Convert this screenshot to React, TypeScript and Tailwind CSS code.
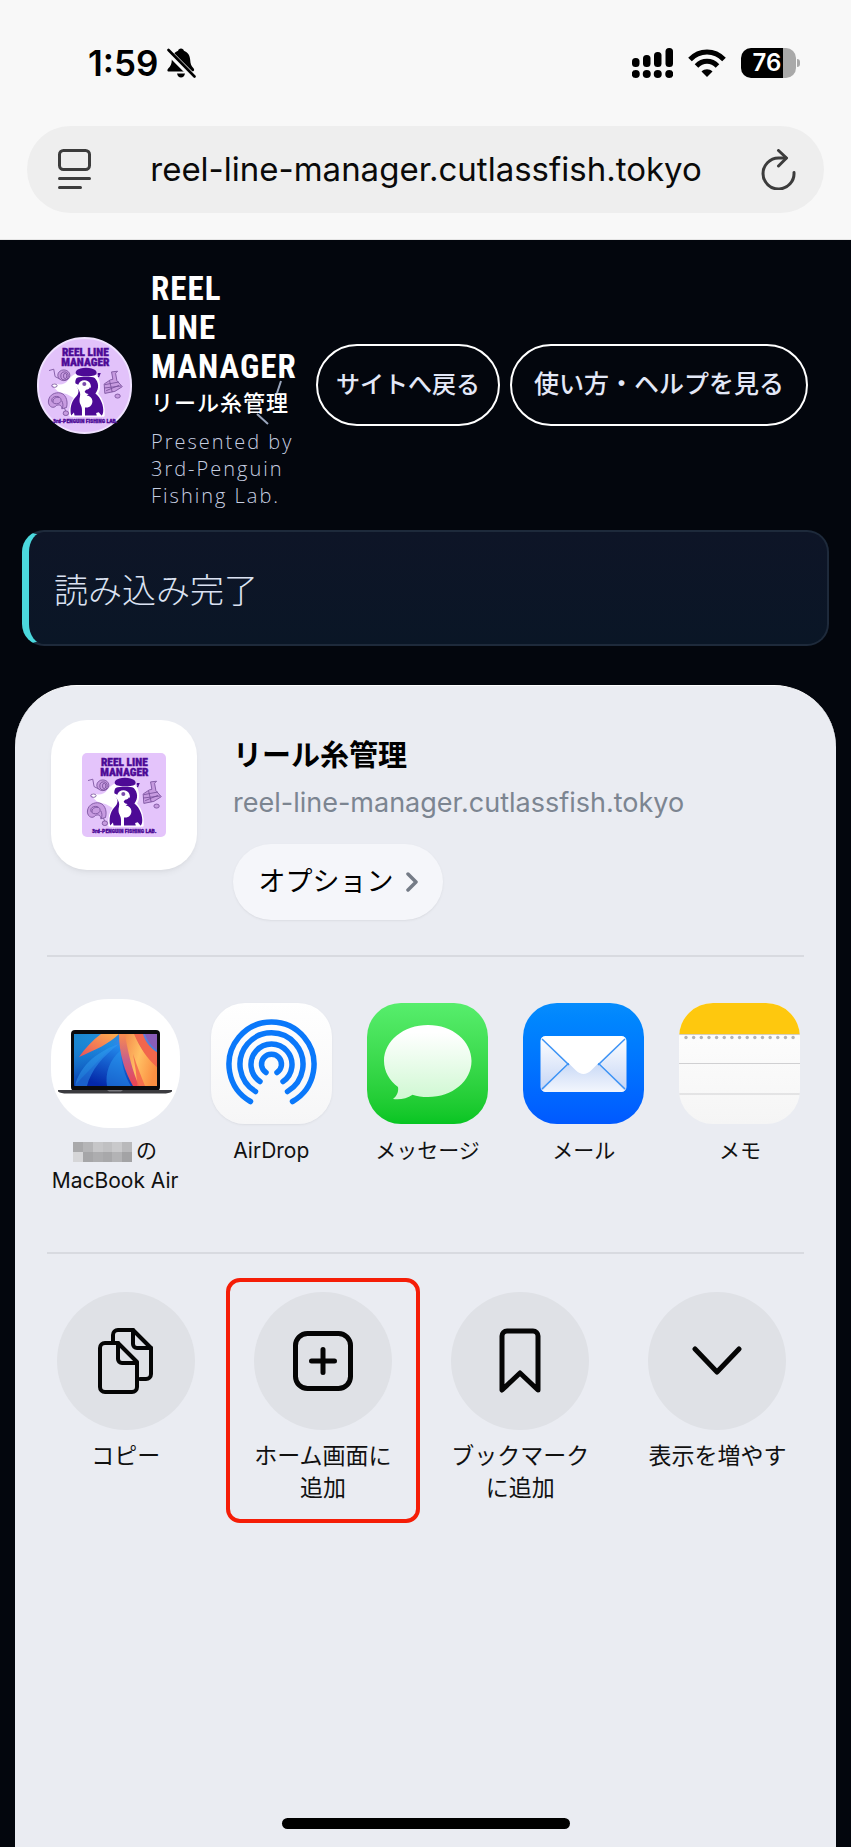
import type { ReactNode } from "react";

const sans = "font-['Inter','Noto_Sans_CJK_JP',sans-serif]";

function BellOff() {
    return (
        <svg viewBox="0 0 30 31" className="h-[31px] w-[30px]" aria-hidden="true">
            <path d="M15 0.5c-1.600 0-2.600 1-2.900 2.200C8 4.200 6 7.500 5.800 12c-.2 4-1 6-3.600 8.400C1.200 21.500.9 23.500 3 23.500h23.500c2 0 2-2 1-3.200-2.300-2.500-3.100-4.500-3.300-8.300-.2-4.500-2.200-7.800-6.300-9.300C17.600 1.500 16.600.5 15 .5z" />
            <path d="M11 25.500h8c-.5 2.800-2 4-4 4s-3.500-1.200-4-4z" />
            <path d="M1 2.500L28 29.500" stroke="#f8f8f8" strokeWidth="6.500" />
            <path d="M2.500 2L28.500 28.500" stroke="#000" strokeWidth="2.600" strokeLinecap="round" />
        </svg>
    );
}

function Signal() {
    const bars = [
        { x: 0, y: 10, h: 9 },
        { x: 11, y: 7, h: 12 },
        { x: 22, y: 4, h: 15 },
        { x: 33.500, y: 0, h: 19 },
    ];
    return (
        <svg viewBox="0 0 41 31" className="h-[31px] w-[41px]" aria-hidden="true">
            {bars.map((bar) => (
                <g key={bar.x}>
                    <rect x={bar.x} y={bar.y} width="7.500" height={bar.h} rx="3.500" />
                    <circle cx={bar.x + 3.750} cy="26" r="4" />
                </g>
            ))}
        </svg>
    );
}

function Wifi() {
    return (
        <svg viewBox="0 0 38 28" className="h-[28px] w-[38px]" aria-hidden="true" fill="none" stroke="#000" strokeWidth="5">
            <path d="M2 10.500C11.500.5 26.500.5 36 10.500" />
            <path d="M8.500 17C14.500 10.800 23.500 10.800 29.500 17" />
            <path d="M19 28l-5.500-5.600c3-3 8-3 11 0z" fill="#000" stroke="none" />
        </svg>
    );
}

function Battery() {
    return (
        <div className="flex items-center gap-px">
            <div className="flex h-[30px] w-[55px] items-center justify-center rounded-[10px] bg-[linear-gradient(to_right,#000_76%,#a9a9a9_76%)] pr-[3px] text-[24px] leading-none font-semibold text-white">
                76
            </div>
            <div className="h-[8px] w-[3px] rounded-r-full bg-[#a9a9a9]" />
        </div>
    );
}

function PenguinLogo({ className }: { className: string }) {
    return (
        <svg viewBox="0 0 250 250" className={className} role="img" aria-label="Reel Line Manager">
            <g
                fill="#4d0a96"
                fontFamily="'Roboto Condensed','Roboto',sans-serif"
                fontWeight="900"
                textAnchor="middle"
            >
                <text x="126" y="38" fontSize="34" stroke="#4d0a96">REEL LINE</text>
                <text x="126" y="69" fontSize="34" stroke="#4d0a96">MANAGER</text>
                <text x="126" y="237" fontSize="17" stroke="#4d0a96" strokeWidth="1">3rd-PENGUIN FISHING LAB.</text>
            </g>
            {/* white halo and beak */}
            <path
                d="M32 124c22 8 38 0 48-14 6-8 12-14 20-16l56 4c12 12 14 38 4 52 14 16 22 40 20 66H82c-2-22 4-42 14-54-12-6-20-14-34-16-14-2-24-10-30-22z"
                fill="#fff"
                stroke="#fff"
                strokeWidth="7"
                strokeLinejoin="round"
            />
            {/* hat */}
            <path d="M100 94c-8-8 2-20 28-20s36 12 30 19c-3 4-8 5-14 5h-30c-6 0-11-1-14-4z" fill="#4d0a96" />
            <path d="M163 89h9l-5 13-4-1 2-5h-2z" fill="#4d0a96" />
            {/* head and body */}
            <path d="M100 104c14-6 44-6 54 0 12 12 14 32 2 46 16 12 26 38 23 56-1 6-3 9-5 10l-8-10-8 2 2 8H94l-2-9-8 9c-5-20 0-40 12-54 8-8 12-16 8-26-6-10-12-20-4-32z" fill="#4d0a96" />
            <path d="M78 118c10 2 18 6 26 18 6 8 8 14 6 24-2 8-2 18 2 24 3 6 4 10 4 16v17h9v-25c14 2 23-8 22-20-1-9-7-15-17-16 8-4 12-10 12-16 4-18-6-29-18-29-10 0-17 6-19 13-8-4-16-8-27-6z" fill="#fff" />
            <path d="M128 139c6 0 10-3 12-8l6 8-4 14-10-2c-4-1-6-3-8-6z" fill="#4d0a96" />
            <circle cx="123" cy="122" r="6" fill="#7a4bab" />
            {/* reels */}
            <g fill="#c79be0" stroke="#77509b" strokeWidth="2.500">
                <path d="M18 82l14-4 4 22 16 8" fill="none" />
                <ellipse cx="62" cy="96" rx="18" ry="16" />
                <ellipse cx="64" cy="98" rx="11" ry="12" fill="none" />
                <ellipse cx="66" cy="98" rx="5" ry="8" fill="none" />
                <ellipse cx="34" cy="127" rx="8" ry="5" fill="none" />
                <path d="M204 86l18-2-6 6 4 22 16 18-22 14-30 6-2-28 18-12 8-2z" />
                <path d="M184 124l42-8M182 134l50-6M188 142l38-16M198 112l8 34" fill="none" />
                <ellipse cx="222" cy="158" rx="8" ry="6" />
                <path d="M16 176c0-18 14-28 30-28 20 0 30 22 24 44l-14 4c0-10-6-14-16-10-8 10-22 6-24-10z" />
                <ellipse cx="40" cy="170" rx="14" ry="11" fill="none" />
                <path d="M30 176c-2-10 8-16 18-14M56 172c4 8 4 14 2 22M64 194l4 10" fill="none" />
                <ellipse cx="68" cy="209" rx="8" ry="7" />
            </g>
        </svg>
    );
}

function MacBook() {
    return (
        <div className="h-[129px] w-[129px] rounded-[58px] bg-white">
            <svg viewBox="0 0 129 129" className="size-full" aria-hidden="true">
                <defs>
                    <linearGradient id="mbBlue" x1="0.900" y1="0" x2="0.350" y2="1">
                        <stop offset="0" stopColor="#6d7bd6" />
                        <stop offset="0.350" stopColor="#2288ea" />
                        <stop offset="1" stopColor="#0428a8" />
                    </linearGradient>
                    <linearGradient id="mbCyan" x1="0" y1="0" x2="0.700" y2="0.800">
                        <stop offset="0" stopColor="#1a86cc" />
                        <stop offset="1" stopColor="#1b9be0" stopOpacity="0" />
                    </linearGradient>
                    <linearGradient id="mbFlame" x1="0" y1="0" x2="1" y2="0.400">
                        <stop offset="0" stopColor="#f58a4c" />
                        <stop offset="0.500" stopColor="#ffc063" />
                        <stop offset="1" stopColor="#fb8f42" />
                    </linearGradient>
                    <linearGradient id="mbRed" x1="0" y1="0" x2="0" y2="1">
                        <stop offset="0" stopColor="#fb8a4c" />
                        <stop offset="0.500" stopColor="#c8608a" />
                        <stop offset="1" stopColor="#ee4450" />
                    </linearGradient>
                    <linearGradient id="mbStreak" x1="1" y1="0" x2="0" y2="1">
                        <stop offset="0" stopColor="#ffb04c" />
                        <stop offset="1" stopColor="#e8505c" />
                    </linearGradient>
                    <clipPath id="mbScreen">
                        <rect x="23" y="35" width="83" height="52" />
                    </clipPath>
                </defs>
                <rect x="20" y="31" width="89" height="61" rx="4" fill="#0b0b0d" />
                <g clipPath="url(#mbScreen)">
                    <rect x="23" y="35" width="83" height="52" fill="url(#mbBlue)" />
                    <path d="M23 35h50L23 87z" fill="url(#mbCyan)" />
                    <path d="M24 87c4-18 20-34 44-42-16 12-28 26-32 42z" fill="#35a4f5" opacity="0.450" />
                    <path d="M56 87c-2-12 2-26 14-36 0 14 4 26 10 36z" fill="#2a9af0" opacity="0.500" />
                    <path d="M50 35c-8 6-16 14-22 23 16-7 30-13 40-23z" fill="url(#mbStreak)" />
                    <path d="M68 35c0 20 6 38 14 52h10C86 66 82 50 80 35z" fill="url(#mbRed)" />
                    <path d="M74 35c3 20 8 38 14 52h20V68C98 60 88 48 84 35z" fill="url(#mbFlame)" />
                    <path d="M82 55c2 12 4 22 4 32h8c-4-10-8-20-12-32z" fill="#f2604c" opacity="0.800" />
                    <path d="M83 35c6 14 14 26 24 34V54C98 48 94 42 92 35z" fill="#f2664c" />
                    <path d="M94 35c3 8 7 13 13 17V35z" fill="#8a5cb8" />
                </g>
                <path d="M7 91h114v1.500c-2 1.500-5 2-9 2H16c-4 0-7-.5-9-2z" fill="#3b3b3f" />
                <path d="M56 91h16l-2 1.500H58z" fill="#77777c" />
            </svg>
        </div>
    );
}

function AirDrop() {
    return (
        <div className="size-[121px] rounded-[34px] bg-linear-to-b from-white to-[#f6f6f7] shadow-sm shadow-black/5">
            <svg viewBox="0 0 121 121" className="size-full" aria-hidden="true" fill="none" stroke="#0a78fa" strokeWidth="5.500" strokeLinecap="round">
                <path d="M39.500 98.500A42.500 42.500 0 1 1 81.500 98.500" />
                <path d="M44.500 88.500A31.500 31.500 0 1 1 76.500 88.500" />
                <path d="M49 78.500A20.500 20.500 0 1 1 72 78.500" />
                <path d="M55 69.500A10 10 0 1 1 66 69.500" />
            </svg>
        </div>
    );
}

function Messages() {
    return (
        <div className="size-[121px] rounded-[34px] bg-linear-to-b from-[#57ee6c] to-[#06c522]">
            <svg viewBox="0 0 121 121" className="size-full" aria-hidden="true">
                <defs>
                    <linearGradient id="bubble" x1="0" y1="0" x2="0" y2="1">
                        <stop offset="0.100" stopColor="#fff" />
                        <stop offset="1" stopColor="#cff8d2" />
                    </linearGradient>
                </defs>
                <path d="M61 22c24.500 0 43.500 16 43.500 36S85.500 94 61 94c-6 0-11-.8-15.500-2.300C40 95.500 33 97 26 96c4-3 5.800-7.500 5-12C22.500 77.500 17 68.500 17 58c0-20 19.500-36 44-36z" fill="url(#bubble)" />
            </svg>
        </div>
    );
}

function Mail() {
    return (
        <div className="size-[121px] rounded-[34px] bg-linear-to-b from-[#068cfd] to-[#0159ff]">
            <svg viewBox="0 0 121 121" className="size-full" aria-hidden="true">
                <defs>
                    <linearGradient id="side" x1="0" y1="0" x2="0" y2="1">
                        <stop offset="0" stopColor="#fff" />
                        <stop offset="1" stopColor="#c3d4f5" />
                    </linearGradient>
                    <linearGradient id="pocket" x1="0" y1="0" x2="0" y2="1">
                        <stop offset="0" stopColor="#c9d9f6" />
                        <stop offset="1" stopColor="#f4f7fd" />
                    </linearGradient>
                    <clipPath id="envelope">
                        <rect x="17.500" y="33" width="86" height="56" rx="5" />
                    </clipPath>
                </defs>
                <g clipPath="url(#envelope)">
                    <rect x="17" y="33" width="87" height="56" fill="url(#side)" />
                    <path d="M17 90l30-30h27l30 30z" fill="url(#pocket)" />
                    <path d="M19 86l28-27M102 86L74 59" stroke="#3c93f5" strokeWidth="1.500" />
                    <path d="M19 34l34 33.500c4.500 4.500 10.500 4.500 15 0L102 34z" fill="#fff" />
                    <path d="M19 36l27 26M102 36L75 62" stroke="#3c93f5" strokeWidth="1.500" />
                </g>
            </svg>
        </div>
    );
}

function Notes() {
    return (
        <div className="size-[121px] overflow-hidden rounded-[34px] bg-linear-to-b from-white to-[#f5f5f5]">
            <svg viewBox="0 0 121 121" className="size-full" aria-hidden="true">
                <rect width="121" height="31" fill="#fec80e" />
                <path d="M0 31.500h121" stroke="#d5cfc0" />
                {Array.from({ length: 15 }).map((_, i) => (
                    <circle key={i} cx={7 + i * 7.650} cy="34.500" r="1.700" fill="#b4b4b6" />
                ))}
                <path d="M0 60.500h121M0 91h121" stroke="#d0d0d2" strokeWidth="1.200" />
            </svg>
        </div>
    );
}

const mosaic = [
    "bg-[#a9a9ab]", "bg-[#b5b5b7]", "bg-[#c6c6c8]", "bg-[#c0c0c2]", "bg-[#c9c9cb]", "bg-[#b9b9bb]",
    "bg-[#d6d6d8]", "bg-[#a6a6a8]", "bg-[#adadaf]", "bg-[#a8a8aa]", "bg-[#b3b3b5]", "bg-[#a3a3a5]",
];

const targets: { icon: ReactNode; label: ReactNode }[] = [
    {
        icon: <MacBook />,
        label: (
            <>
                <span className="mr-1 inline-grid h-5 w-[59px] grid-cols-6 align-middle">
                    {mosaic.map((tone, i) => (
                        <span key={i} className={tone} />
                    ))}
                </span>
                の<br />
                MacBook Air
            </>
        ),
    },
    { icon: <AirDrop />, label: "AirDrop" },
    { icon: <Messages />, label: "メッセージ" },
    { icon: <Mail />, label: "メール" },
    { icon: <Notes />, label: "メモ" },
];

const line = { fill: "none", stroke: "#050505", strokeLinecap: "round", strokeLinejoin: "round" } as const;

const actions = [
    {
        label: ["コピー"],
        highlighted: false,
        icon: (
            <svg viewBox="0 0 56 66" className="h-[66px] w-[56px]" strokeWidth="4" {...line}>
                <path d="M15 13V7a5 5 0 0 1 5-5h15l18 18v26a5 5 0 0 1-5 5h-6" />
                <path d="M35 2v14a4 4 0 0 0 4 4h14" />
                <path d="M7 15h13l19 19v25a5 5 0 0 1-5 5H7a5 5 0 0 1-5-5V20a5 5 0 0 1 5-5z" />
                <path d="M20 15v16a4 4 0 0 0 4 4h15" />
            </svg>
        ),
    },
    {
        label: ["ホーム画面に", "追加"],
        highlighted: true,
        icon: (
            <svg viewBox="0 0 60 60" className="size-[60px]" strokeWidth="5" {...line}>
                <rect x="2.500" y="2.500" width="55" height="55" rx="12" />
                <path d="M30 18.500v23M18.500 30h23" />
            </svg>
        ),
    },
    {
        label: ["ブックマーク", "に追加"],
        highlighted: false,
        icon: (
            <svg viewBox="0 0 42 66" className="h-[66px] w-[42px]" strokeWidth="5" {...line}>
                <path d="M3 62V8a5 5 0 0 1 5-5h26a5 5 0 0 1 5 5v54L21 45z" />
            </svg>
        ),
    },
    {
        label: ["表示を増やす"],
        highlighted: false,
        icon: (
            <svg viewBox="0 0 50 30" className="h-[30px] w-[50px]" strokeWidth="5" {...line}>
                <path d="M3 3l22 23L47 3" />
            </svg>
        ),
    },
];

function BrowserBar() {
    return (
        <header className="border-b border-[#e4e4e4] bg-[#f8f8f8] px-[27px] pb-[26px]">
            <div className="flex h-[126px] items-center justify-between pr-6 pl-[61px]">
                <div className="flex items-center gap-2">
                    <span className="text-[35px] leading-none font-semibold">1:59</span>
                    <BellOff />
                </div>
                <div className="flex items-center gap-[15px]">
                    <Signal />
                    <Wifi />
                    <Battery />
                </div>
            </div>
            <div className="flex h-[87px] items-center justify-between rounded-full bg-[#eeeeee] pr-7 pl-[31px]">
                <button type="button" aria-label="ページメニュー">
                    <svg viewBox="0 0 33 41" className="h-[41px] w-[33px]" fill="none" stroke="#3c3c3c" strokeWidth="3" strokeLinecap="round">
                        <rect x="1.500" y="1.500" width="30" height="19" rx="4" />
                        <path d="M1.500 29.500h30M1.500 38.500h21" />
                    </svg>
                </button>
                <span className="text-[33px] leading-none text-[#0a0a0a]">reel-line-manager.cutlassfish.tokyo</span>
                <button type="button" aria-label="再読み込み">
                    <svg viewBox="0 0 35 41" className="h-[41px] w-[35px]" fill="none" stroke="#3c3c3c" strokeWidth="3" strokeLinecap="round" strokeLinejoin="round">
                        <path d="M33 23.500A15.500 15.500 0 1 1 17.500 9H25" />
                        <path d="M17.500 1.500l8 7.500-8 8" />
                    </svg>
                </button>
            </div>
        </header>
    );
}

function SiteHeader() {
    return (
        <div className="flex items-center px-[22px] py-[21px]">
            <a href="#top" className="ml-[15px] flex h-[97px] w-[95px] shrink-0 items-center justify-center rounded-full border-2 border-[#f0e2ff] bg-[#e2c2fa]">
                <PenguinLogo className="size-[84px]" />
            </a>
            <div className="relative ml-[19px] w-[145px] shrink-0 pt-2">
                <h1 className="font-['Liberation_Sans_Narrow','Roboto_Condensed',Roboto,sans-serif] text-[33px] leading-[39px] font-bold tracking-[1px] text-white">
                    REEL<br />LINE<br />MANAGER
                </h1>
                <p className="text-[22px] leading-[34px] font-medium tracking-[1px] text-white">リール糸管理</p>
                <p className="mt-2 font-['Open_Sans',sans-serif] text-[20px] leading-[27px] font-light tracking-[2px] text-[#c6cee0]">
                    Presented by<br />3rd-Penguin<br />Fishing Lab.
                </p>
                <svg viewBox="0 0 30 48" className="absolute top-[118px] right-3 h-[48px] w-[30px]" stroke="#9aa6bd" strokeWidth="2" aria-hidden="true">
                    <path d="M27 2l-4 12M3 35l11 10" />
                </svg>
            </div>
            <nav className="ml-5 flex items-center gap-[10px] whitespace-nowrap text-[#e3e8f7]">
                <a href="#site" className="flex h-[82px] w-[184px] items-center justify-center rounded-full border-2 border-white text-[24px] font-medium">
                    サイトへ戻る
                </a>
                <a href="#help" className="flex h-[82px] w-[298px] items-center justify-center rounded-full border-2 border-white text-[25px] font-medium">
                    使い方・ヘルプを見る
                </a>
            </nav>
        </div>
    );
}

function ShareSheet() {
    return (
        <section className="mx-[15px] mt-[39px] flex flex-1 flex-col rounded-t-[62px] border-t border-white bg-[#eaecf2] px-4 pt-[34px]">
            <div className="flex gap-9 px-5">
                <div className="flex h-[150px] w-[146px] shrink-0 items-center justify-center rounded-[36px] bg-white shadow-md shadow-black/5">
                    <PenguinLogo className="size-[84px] rounded-[5px] bg-[#e4c4fb]" />
                </div>
                <div className="pt-4">
                    <h2 className="text-[29px] leading-[40px] font-bold text-black">リール糸管理</h2>
                    <p className="mt-2 text-[27px] leading-[38px] text-[#7c8591]">reel-line-manager.cutlassfish.tokyo</p>
                    <button type="button" className="mt-[22px] flex h-[76px] w-[210px] items-center justify-center gap-3 rounded-full bg-[#f5f6fa] text-[27px] text-black shadow-sm shadow-black/5">
                        オプション
                        <svg viewBox="0 0 12 20" className="h-[20px] w-[12px]" fill="none" stroke="#747b86" strokeWidth="3.500" strokeLinecap="round" strokeLinejoin="round">
                            <path d="M2 2l8 8-8 8" />
                        </svg>
                    </button>
                </div>
            </div>

            <hr className="mx-4 mt-[35px] border-t-2 border-[#d8dae0]" />

            <ul className="mt-[42px] mr-0.5 ml-1.5 grid h-[211px] grid-cols-5">
                {targets.map((target, i) => (
                    <li key={i}>
                        <button type="button" className="flex w-full flex-col items-center">
                            <span className="flex h-[129px] items-center">{target.icon}</span>
                            <span className="mt-2 text-[21px] leading-[30px] whitespace-nowrap text-[#111]">{target.label}</span>
                        </button>
                    </li>
                ))}
            </ul>

            <hr className="mx-4 mt-[42px] border-t-2 border-[#d8dae0]" />

            <ul className="mt-6 mr-1 -ml-1 grid grid-cols-4">
                {actions.map((action) => (
                    <li key={action.label[0]} className="flex justify-center">
                        <button
                            type="button"
                            className={`flex h-[245px] w-[194px] flex-col items-center rounded-[14px] border-4 pt-[10px] ${action.highlighted ? "border-[#f51d07]" : "border-transparent"}`}
                        >
                            <span className="flex size-[138px] shrink-0 items-center justify-center rounded-full bg-[#dfe1e6]">
                                {action.icon}
                            </span>
                            <span className="mt-[10px] text-[23px] leading-8 text-[#111]">
                                {action.label.map((part) => (
                                    <span key={part} className="block whitespace-nowrap">{part}</span>
                                ))}
                            </span>
                        </button>
                    </li>
                ))}
            </ul>

            <div className="mx-auto mt-auto mb-[18px] h-[11px] w-[288px] rounded-full bg-black" />
        </section>
    );
}

export default function App() {
    return (
        <div className={`flex min-h-screen flex-col bg-[#03060d] text-black ${sans}`} lang="ja">
            <BrowserBar />
            <main className="flex flex-1 flex-col">
                <SiteHeader />
                <div
                    role="status"
                    className="mx-[22px] flex h-[116px] items-center rounded-[22px] border-2 border-l-[7px] border-[#1e2a3b] border-l-[#4bd8dd] bg-linear-to-b from-[#0e1527] to-[#0a1626] pt-1 pl-[25px] text-[34px] font-light text-[#dbe2f2]"
                >
                    読み込み完了
                </div>
                <ShareSheet />
            </main>
        </div>
    );
}
